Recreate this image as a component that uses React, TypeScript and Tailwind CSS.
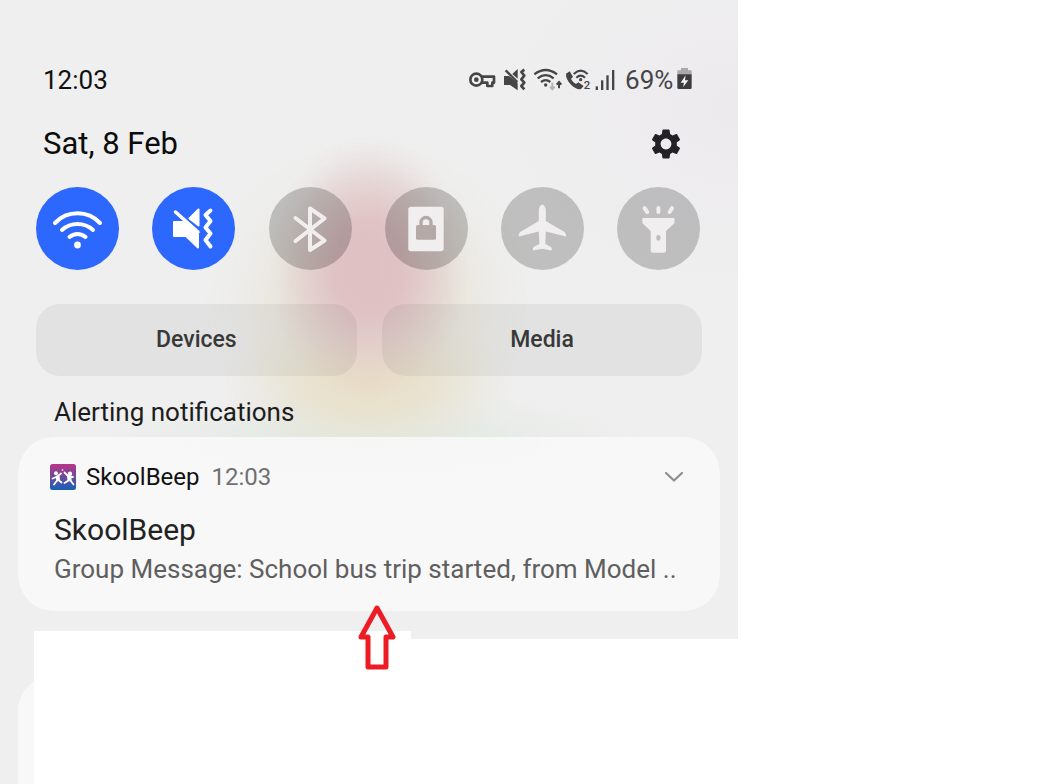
import { useState } from "react";
import type { ReactNode } from "react";
import { MdSettings } from "react-icons/md";

// Status bar icons share one height, so they line up in a row
function StatusIcons() {
  return (
    <div className="flex h-6 text-[#454548]">
      <svg className="h-6 w-[30px]" viewBox="27 36 90 72" fill="none" stroke="currentColor" strokeWidth="8">
        <circle cx="49" cy="71" r="18" />
        <circle cx="49" cy="71" r="7" fill="currentColor" stroke="none" />
        <path d="M65 62 H102 V80 H97 V90 H82 V80 H65" strokeLinejoin="round" />
      </svg>
      <svg className="h-6 w-[31px]" viewBox="117 36 93 72" fill="none" stroke="currentColor">
        <path d="M132 60 H147 L173 80 V103 L150 87 H132 Z" fill="currentColor" stroke="none" />
        <path d="M173 39 V68 L157 54 Z" fill="currentColor" stroke="none" />
        <path d="M137 43 L172 78" strokeWidth="7" />
        <path d="M193 41 L184 48 L193 59 L184 70 L193 80 L184 90 L193 100" strokeWidth="8" strokeLinejoin="round" />
      </svg>
      <svg className="h-6 w-[34px]" viewBox="210 36 102 72" fill="none" stroke="currentColor" strokeWidth="7">
        <path d="M223 55 Q257 29 291 55" />
        <path d="M233 67 Q257 48 281 67" />
        <path d="M243 78 Q257 67 271 78" />
        <circle cx="257" cy="87" r="5" fill="currentColor" stroke="none" />
        <path d="M277 80 V98 M270 92 L277 100 L284 92" stroke="#b5b5b8" strokeWidth="6" />
        <path d="M297 97 V80 M290 86 L297 78 L304 86" strokeWidth="6" />
      </svg>
      <svg className="h-6 w-[29px]" viewBox="312 36 87 72" fill="none" stroke="currentColor" strokeWidth="6">
        <path
          d="M318 53 L329 46 L339 62 L333 69 Q338 79 348 84 L355 79 L371 90 L363 99 Q349 102 334 87 Q317 70 318 53 Z"
          fill="currentColor"
          stroke="none"
        />
        <path d="M341 54 Q362 34 383 54" />
        <path d="M349 65 Q362 53 375 65" />
        <circle cx="362" cy="71" r="5" fill="currentColor" stroke="none" />
        <text x="371" y="98" fontSize="34" fontFamily="Roboto, sans-serif" fontWeight="500" fill="currentColor" stroke="none">
          2
        </text>
      </svg>
      <svg className="h-6 w-6" viewBox="399 36 72 72" fill="currentColor">
        <rect x="407" y="91" width="7" height="11" />
        <rect x="423" y="73" width="7" height="29" />
        <rect x="439" y="58" width="7" height="44" />
        <rect x="456" y="42" width="7" height="60" />
      </svg>
    </div>
  );
}

function Battery() {
  return (
    <svg className="h-6 w-[15px]" viewBox="651 39 45 72">
      <path d="M663 39 H684 V46 H695 V59 H652 V46 H663 Z" fill="#a9a9ac" />
      <path d="M652 58 H695 V98 Q695 102 691 102 H656 Q652 102 652 98 Z" fill="#3c3c3f" />
      <path d="M677 61 L662 83 H672 L669 97 L685 76 H675 Z" fill="#f4f4f4" />
    </svg>
  );
}

type Toggle = { name: string; icon: ReactNode };

const toggles: Toggle[] = [
  {
    name: "Wi-Fi",
    icon: (
      <g fill="none" stroke="currentColor" strokeWidth="4" strokeLinecap="round">
        <path d="M19 36 A31 31 0 0 1 64 36" />
        <path d="M26 43 A23 23 0 0 1 57 43" />
        <path d="M33.5 50 A12 12 0 0 1 49.5 50" />
        <circle cx="41.5" cy="58" r="3.4" fill="currentColor" stroke="none" />
      </g>
    ),
  },
  {
    name: "Vibrate",
    icon: (
      <g fill="currentColor" stroke="currentColor" strokeLinecap="round" strokeLinejoin="round">
        <path d="M22 35 H31 L46 47.5 V60.5 L34 49 H22 Z" strokeWidth="2" />
        <path d="M46.5 22.5 V38.500 L37.500 31.500 Z" strokeWidth="2" />
        <path d="M23.5 25 L46 45" strokeWidth="3.5" />
        <path d="M58.5 23.5 L53.5 28 L58.5 34 L53.5 40.5 L58.5 46.5 L53.5 53 L58.5 59.5" fill="none" strokeWidth="4" />
      </g>
    ),
  },
  {
    name: "Bluetooth",
    icon: (
      <path
        d="M26.5 31 L55.5 53.5 L41 63 V21.5 L55.5 31.5 L26.5 54"
        fill="none"
        stroke="currentColor"
        strokeWidth="4"
        strokeLinecap="round"
        strokeLinejoin="round"
      />
    ),
  },
  {
    name: "Screen lock",
    icon: (
      <>
        <rect x="23.3" y="19.7" width="35.4" height="44.6" rx="2.8" fill="currentColor" />
        <rect x="31" y="38" width="20" height="14.7" rx="1.5" fill="#b5a9a8" />
        <path d="M36 39 V35.5 A5 5 0 0 1 46 35.5 V39" fill="none" stroke="#b5a9a8" strokeWidth="3.4" />
      </>
    ),
  },
  {
    name: "Flight mode",
    icon: (
      <path
        d="M41.3 17.5 Q44.8 18.5 44.8 24 V34 L63.5 45 Q65.5 46.5 65 49.5 L44.8 44.5 L44.3 57 L50 60 Q51.5 61.5 50.5 63.5 L41.3 61.8 L32.2 63.5 Q31 61.5 32.7 60 L38.3 57 L37.8 44.5 L17.7 49.5 Q17 46.5 19.2 45 L37.8 34 V24 Q37.8 18.5 41.3 17.5 Z"
        fill="currentColor"
      />
    ),
  },
  {
    name: "Torch",
    icon: (
      <>
        <path
          d="M26.3 31 H56.5 Q57.5 31 57.5 32 V35 Q57.5 36 56.8 36.7 L49 44 V63.5 Q49 65.8 46.8 65.8 H36 Q33.7 65.8 33.7 63.5 V44 L26 36.7 Q25.3 36 25.3 35 V32 Q25.3 31 26.3 31 Z"
          fill="currentColor"
        />
        <ellipse cx="41.4" cy="50.8" rx="2.1" ry="2.8" fill="#bdbdbd" />
        <path
          d="M27.6 21.2 L30.2 25 M41.4 21 V25 M55 21.2 L52.6 25"
          stroke="currentColor"
          strokeWidth="4"
          strokeLinecap="round"
        />
      </>
    ),
  },
];

function AppIcon() {
  return (
    <svg className="size-[26px]" viewBox="0 0 26 26">
      <defs>
        <linearGradient id="skool" x1="0" y1="0" x2="0" y2="1">
          <stop offset="0" stopColor="#bb3585" />
          <stop offset="0.5" stopColor="#6b4a9c" />
          <stop offset="1" stopColor="#1560b4" />
        </linearGradient>
      </defs>
      <rect width="26" height="26" rx="2.5" fill="url(#skool)" />
      {/* two kids jumping */}
      <g fill="none" stroke="#fff" strokeWidth="1.8" strokeLinecap="round" strokeLinejoin="round">
        <path d="M2.500 14.500 L6.500 13 L11 9.500 M7.500 16 L4 20.500 M8.500 16 L11.500 18.500" />
        <path d="M14.500 8.500 L18.500 12.500 L23 13 M18.500 16.500 L14.500 19 M20.500 16.500 L23.500 20.500" />
      </g>
      <path d="M5.500 12 L9.500 11.500 L10 16.500 L6.500 17.500 Z M17 11.500 L21.500 13 L21.500 17.500 L17.500 17 Z" fill="#fff" />
      <circle cx="6" cy="9.200" r="2" fill="#fff" />
      <circle cx="20" cy="9.800" r="2.200" fill="#fff" />
      <circle cx="12.500" cy="6" r="1" fill="#e9b7d0" />
    </svg>
  );
}

export default function App() {
  const [active, setActive] = useState(["Wi-Fi", "Vibrate"]);

  const toggle = (name: string) =>
    setActive((prev) => (prev.includes(name) ? prev.filter((n) => n !== name) : [...prev, name]));

  return (
    <div className="min-h-screen bg-white font-[Roboto,sans-serif]">
      <main className="flex min-h-screen w-[71%] flex-col bg-[#efefef] bg-[radial-gradient(ellipse_100px_132px_at_50%_268px,#dfbfc3_0%,#dfbfc3e6_35%,#dfc3c680_66%,#dfc3c626_86%,#dfc3c600_100%),radial-gradient(ellipse_150px_72px_at_50%_384px,#e9dfc8_0%,#e8e1cccc_40%,#e8e3d466_70%,#e8e3d400_100%),radial-gradient(ellipse_165px_165px_at_50%_300px,#e4ddcc_0%,#e6e2d4b3_50%,#e8e6dc40_80%,#e8e6dc00_100%),radial-gradient(ellipse_270px_50px_at_50%_440px,#dfe8df_0%,#e2e9e199_50%,#e2e9e100_100%),radial-gradient(ellipse_240px_180px_at_100%_110px,#edeaee_0%,#efefef00_100%)]">
        <header className="flex items-center justify-between pt-16 pr-[46px] pl-[43px]">
          <span className="text-[26px] leading-8 text-[#111]">12:03</span>
          <div className="flex items-center">
            <StatusIcons />
            <span className="ml-2 text-[26px] leading-8 text-[#454548]">69%</span>
            <span className="ml-1">
              <Battery />
            </span>
          </div>
        </header>

        <div className="mt-7 flex items-center justify-between pr-[54px] pl-[43px]">
          <h1 className="text-[31px] leading-10 text-[#0c0c0c]">Sat, 8 Feb</h1>
          <button aria-label="Settings" className="text-[#222226]">
            <MdSettings className="size-9" />
          </button>
        </div>

        <div className="mt-[23px] flex justify-between pr-[38px] pl-9">
          {toggles.map((t) => (
            <button
              key={t.name}
              aria-label={t.name}
              aria-pressed={active.includes(t.name)}
              onClick={() => toggle(t.name)}
              className={
                active.includes(t.name)
                  ? "size-[83px] rounded-full bg-[#2d68fe] text-white"
                  : "size-[83px] rounded-full bg-black/20 text-[#f0eeee]"
              }
            >
              <svg className="size-full" viewBox="0 0 83 83">
                {t.icon}
              </svg>
            </button>
          ))}
        </div>

        <div className="mt-[34px] grid grid-cols-2 gap-[25px] pr-9 pl-9">
          <button className="h-[72px] rounded-3xl bg-black/5 text-[23px] font-medium text-[#383838]">Devices</button>
          <button className="h-[72px] rounded-3xl bg-black/5 text-[23px] font-medium text-[#383838]">Media</button>
        </div>

        <h2 className="mt-5 pl-[54px] text-[26px] leading-8 text-[#1c1c1c]">Alerting notifications</h2>

        <article className="mt-[9px] mr-[18px] ml-[18px] rounded-[36px] bg-[#f9f9f9]/85 pt-6 pr-9 pb-6 pl-8">
          <div className="flex items-center">
            <AppIcon />
            <span className="ml-2.5 text-2xl leading-8 text-[#111]">SkoolBeep</span>
            <span className="ml-3 text-2xl leading-8 text-[#707070]">12:03</span>
            <button aria-label="Expand" className="ml-auto text-[#8e8e8e]">
              <svg className="h-3 w-5" viewBox="0 0 20 12" fill="none" stroke="currentColor" strokeWidth="2.2">
                <path d="M2 2 L10 9.5 L18 2" strokeLinecap="round" strokeLinejoin="round" />
              </svg>
            </button>
          </div>
          <h3 className="mt-5 pl-1 text-[30px] leading-[34px] text-[#222]">SkoolBeep</h3>
          <p className="mt-1 pl-1 text-[26px] leading-9 whitespace-nowrap text-[#5f5f5f]">
            Group Message: School bus trip started, from Model ..
          </p>
        </article>

        {/* The rest of the shade is covered, only the edge of the next card shows */}
        <div className="relative mt-5 flex flex-1">
          <div className="flex w-[34px] overflow-hidden pt-11 pl-[18px]">
            <div className="w-20 shrink-0 rounded-tl-[36px] bg-[#f8f8f8]" />
          </div>
          <div className="w-[51%] bg-white" />
          <div className="mt-2 flex-1 bg-white" />
          <svg
            className="absolute -top-[26px] left-[358px] h-[66px] w-[38px]"
            viewBox="0 0 38 66"
            fill="none"
            stroke="#ed1c24"
            strokeWidth="5"
            strokeLinejoin="round"
          >
            <path d="M19 3 L35 32 H28 V62 H10 V32 H3 Z" />
          </svg>
        </div>
      </main>
    </div>
  );
}
